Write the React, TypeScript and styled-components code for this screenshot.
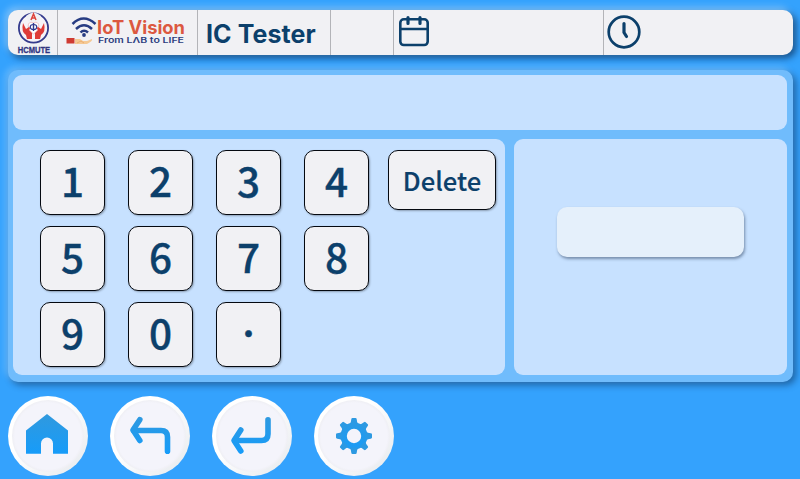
import React from "react";
import styled, { createGlobalStyle } from "styled-components";

const GlobalStyle = createGlobalStyle`
  *, *::before, *::after { box-sizing: border-box; }
  body { margin: 0; background: #34a2fd; overflow: hidden; }
  button { font: inherit; padding: 0; margin: 0; }
`;

const navy = "#0c406b";
const raised = "-3px -3px 7px rgba(255,255,255,.34), 3px 3px 7px rgba(0,20,50,.6)";

const Screen = styled.div`
  width: 800px;
  height: 479px;
  padding: 10px 7px 3px 8px;
  display: flex;
  flex-direction: column;
  background: #34a2fd;
  color: ${navy};
`;

const Header = styled.header`
  height: 45px;
  display: flex;
  border-radius: 10px;
  background: #f1f1f4;
  box-shadow: ${raised};
`;

const Cell = styled.div<{ $w?: number; $pad?: string }>`
  ${(p) => (p.$w ? `width: ${p.$w}px; flex: none;` : "flex: 1;")}
  padding: ${(p) => p.$pad ?? "0"};
  display: flex;
  align-items: flex-start;
  & + & { border-left: 1px solid #b3b4b8; }
  svg { display: block; flex: none; overflow: visible; }
`;

const Title = styled.h1`
  margin: 0;
  font: 700 25px/30px Inter, "Liberation Sans", sans-serif;
  letter-spacing: .08px;
  white-space: nowrap;
`;

const Main = styled.main`
  margin-top: 15px;
  height: 312px;
  padding: 5px 6px 7px 5px;
  display: grid;
  grid-template: 55px 236px / 492px 273px;
  gap: 9px;
  border-radius: 10px;
  background: #70bcfc;
  box-shadow: -3px -3px 7px rgba(255,255,255,.24), 3px 3px 7px rgba(0,20,50,.45);
`;

const Panel = styled.section`
  border-radius: 9px;
  background: #c7e1ff;
`;

const Display = styled(Panel)`
  grid-column: 1 / -1;
`;

const KeyPanel = styled(Panel)`
  display: flex;
  padding: 11px 0 0 27px;
  gap: 19px;
  align-items: flex-start;
`;

const ResultPanel = styled(Panel)`
  padding: 68px 43px 0;
`;

const Result = styled.output`
  display: block;
  height: 50px;
  border-radius: 10px;
  background: #e5f0fb;
  box-shadow: 1px 2px 3px rgba(40,60,90,.5);
`;

const Digits = styled.div`
  display: grid;
  grid-template-columns: repeat(4, 65px);
  grid-auto-rows: 65px;
  gap: 11px 23px;
`;

const Key = styled.button<{ $wide?: boolean; $dot?: boolean }>`
  width: ${(p) => (p.$wide ? 108 : 65)}px;
  height: ${(p) => (p.$wide ? 60 : 65)}px;
  display: flex;
  align-items: center;
  justify-content: center;
  padding: ${(p) => (p.$wide ? "0 0 0" : p.$dot ? "0 0 3px" : "0 0 6px")};
  border: 1px solid #050910;
  border-radius: 10px;
  background: #f1f1f4;
  color: ${navy};
  font-family: "Noto Sans CJK SC", "Noto Sans", sans-serif;
  font-weight: 500;
  font-size: ${(p) => (p.$wide ? 25.6 : p.$dot ? 28 : 40.5)}px;
  line-height: 56px;
  -webkit-text-stroke: ${(p) => (p.$wide ? 0.15 : 0.35)}px ${navy};
  box-shadow: 1px 1px 2px rgba(0,0,0,.3);
`;

const Toolbar = styled.nav`
  margin-top: 14px;
  display: flex;
  gap: 22px;
`;

const RoundButton = styled.button`
  width: 80px;
  height: 80px;
  border: 4px solid transparent;
  border-radius: 50%;
  background:
    radial-gradient(circle closest-side, #f4f4fb 92%, #efeff4 100%) padding-box,
    linear-gradient(135deg, #ffffff 40%, #e7eaee 95%) border-box;
  svg { display: block; margin: -4px; }
`;

const SchoolLogo = () => (
  <svg width="36" height="45" viewBox="0 0 36 45">
    <circle cx="17.500" cy="18" r="14.600" fill="#f6f3f8" stroke="#353b8d" strokeWidth="1.800" />
    <path d="M10 6Q17.500-1 25 6L22 13H13Z" fill="#f1f1f4" />
    <path d="M15 10l2.500-6 2.500 6M16 8h3" fill="none" stroke="#dd433c" strokeWidth="1.500" />
    <path d="M17.500 24C9 18 12 10 17.500 13c5.500-3 8.500 5 0 11Z" fill="#fff" stroke="#e79ba3" strokeWidth=".6" />
    <ellipse cx="17.500" cy="17" rx="3.300" ry="2.500" fill="none" stroke="#30388e" strokeWidth="1.200" />
    <path d="M17.500 13v8" stroke="#30388e" strokeWidth="1.400" />
    <path d="M7 13l3 6 3-2q2 1 0 3l3 3v6h-5l-1-4q-5-3-3-12ZM28 13l-3 6-3-2q-2 1 0 3l-3 3v6h5l1-4q5-3 3-12Z" fill="#df3b38" />
    <text x="1.700" y="43.400" textLength="32.500" lengthAdjust="spacingAndGlyphs" fontFamily="Liberation Sans, sans-serif" fontWeight="700" fontSize="9.400" fill="#30347f" stroke="#30347f" strokeWidth=".3">HCMUTE</text>
  </svg>
);

const VisionLogo = () => (
  <svg width="124" height="36" viewBox="0 0 124 36">
    <g fill="none" stroke="#273c82" strokeWidth="2.500">
      <path d="M7.500 9q11-11 23 0" />
      <path d="M11 14q8-7.500 16 0" />
      <path d="M15.500 17.500q3.500-3.600 7.500 0" />
    </g>
    <circle cx="19" cy="20" r="1.900" fill="#273c82" />
    <path d="M10 24h5l3 2h4l5-2q1 2-5 5H10Z" fill="#f5c994" />
    <path d="M12 28l4-2 3 2" fill="none" stroke="#e7a668" strokeWidth=".8" />
    <rect x="1.500" y="23" width="8" height="5.500" fill="#cf3b32" />
    <text x="32" y="18.500" textLength="88" lengthAdjust="spacingAndGlyphs" fontFamily="Inter, sans-serif" fontWeight="700" fontSize="18.500" fill="#dc5840">IoT Vision</text>
    <text x="33" y="28" textLength="86" lengthAdjust="spacingAndGlyphs" fontFamily="Inter, sans-serif" fontWeight="600" fontSize="7.600" fill="#2c3d80">From LΛB to LIFE</text>
  </svg>
);

const CalendarIcon = () => (
  <svg width="32" height="32" viewBox="0 0 32 32" fill="none" stroke={navy} strokeWidth="2.600" strokeLinecap="round">
    <rect x="2.300" y="4.300" width="27.400" height="25.700" rx="3.500" />
    <path d="M2.500 14h27" />
    <path d="M10 2.500v6M22 2.500v6" strokeWidth="3.200" />
  </svg>
);

const ClockIcon = () => (
  <svg width="34" height="34" viewBox="0 0 34 34" fill="none" stroke={navy} strokeWidth="2.700" strokeLinecap="round">
    <circle cx="17" cy="17" r="15.300" />
    <path d="M17 8.500V17.500L19.500 21.500" strokeWidth="3.200" strokeLinejoin="round" />
  </svg>
);

const teeth = [0, 45, 90, 135, 180, 225, 270, 315];

const ButtonIcon = ({ name }: { name: string }) => (
  <svg width="80" height="80" viewBox="0 0 80 80">
    <defs>
      <linearGradient id={`shade-${name}`} gradientUnits="userSpaceOnUse" x1="0" y1="18" x2="0" y2="60">
        <stop offset="0" stopColor="#3099de" />
        <stop offset="1" stopColor="#159cfb" />
      </linearGradient>
    </defs>
    {name === "home" && (
      <path fill={`url(#shade-${name})`} d="M18 34.500L39 18 60 34.500V57.800H45V47.500a6 6 0 0 0-12 0V57.800H18Z" />
    )}
    {name === "back" && (
      <g fill="none" stroke={`url(#shade-${name})`} strokeWidth="5.600" strokeLinecap="round" strokeLinejoin="round">
        <path d="M29.800 23.700L23 34 29.800 44.500" />
        <path d="M23.500 34.500H51Q57.500 34.500 57.500 41V55.300" />
      </g>
    )}
    {name === "enter" && (
      <g fill="none" stroke={`url(#shade-${name})`} strokeWidth="5.600" strokeLinecap="round" strokeLinejoin="round">
        <path d="M28.800 34L22 44.500 28.800 55" />
        <path d="M23 44.500H49.500Q56 44.500 56 38V23.700" />
      </g>
    )}
    {name === "settings" && (
      <g fill={`url(#shade-${name})`}>
        <path fillRule="evenodd" d="M40 26.500a13.500 13.500 0 1 1 0 27 13.500 13.500 0 0 1 0-27ZM40 32.800a7.200 7.200 0 1 0 0 14.400 7.200 7.200 0 0 0 0-14.400Z" />
        {teeth.map((a) => (
          <path key={a} transform={`rotate(${a} 40 40)`} d="M35.500 28.500Q37.300 26 37.300 23.300q.1-1.300 1.200-1.300h3q1.100 0 1.200 1.300 0 2.700 1.800 5.200Z" />
        ))}
      </g>
    )}
  </svg>
);

const digits = ["1", "2", "3", "4", "5", "6", "7", "8", "9", "0", "·"];
const actions = ["home", "back", "enter", "settings"];

export default function App() {
  return (
    <>
      <GlobalStyle />
      <Screen>
        <Header>
          <Cell $w={49} $pad="0 0 0 8px"><SchoolLogo /></Cell>
          <Cell $w={140} $pad="5px 0 0 7px"><VisionLogo /></Cell>
          <Cell $w={133} $pad="9px 0 0 8px"><Title>IC Tester</Title></Cell>
          <Cell $w={63} />
          <Cell $w={210} $pad="5px 0 0 4px"><CalendarIcon /></Cell>
          <Cell $pad="5px 0 0 3px"><ClockIcon /></Cell>
        </Header>
        <Main>
          <Display />
          <KeyPanel>
            <Digits>
              {digits.map((d) => <Key key={d} $dot={d === "·"}>{d}</Key>)}
            </Digits>
            <Key $wide>Delete</Key>
          </KeyPanel>
          <ResultPanel><Result /></ResultPanel>
        </Main>
        <Toolbar>
          {actions.map((name) => (
            <RoundButton key={name} aria-label={name}><ButtonIcon name={name} /></RoundButton>
          ))}
        </Toolbar>
      </Screen>
    </>
  );
}
